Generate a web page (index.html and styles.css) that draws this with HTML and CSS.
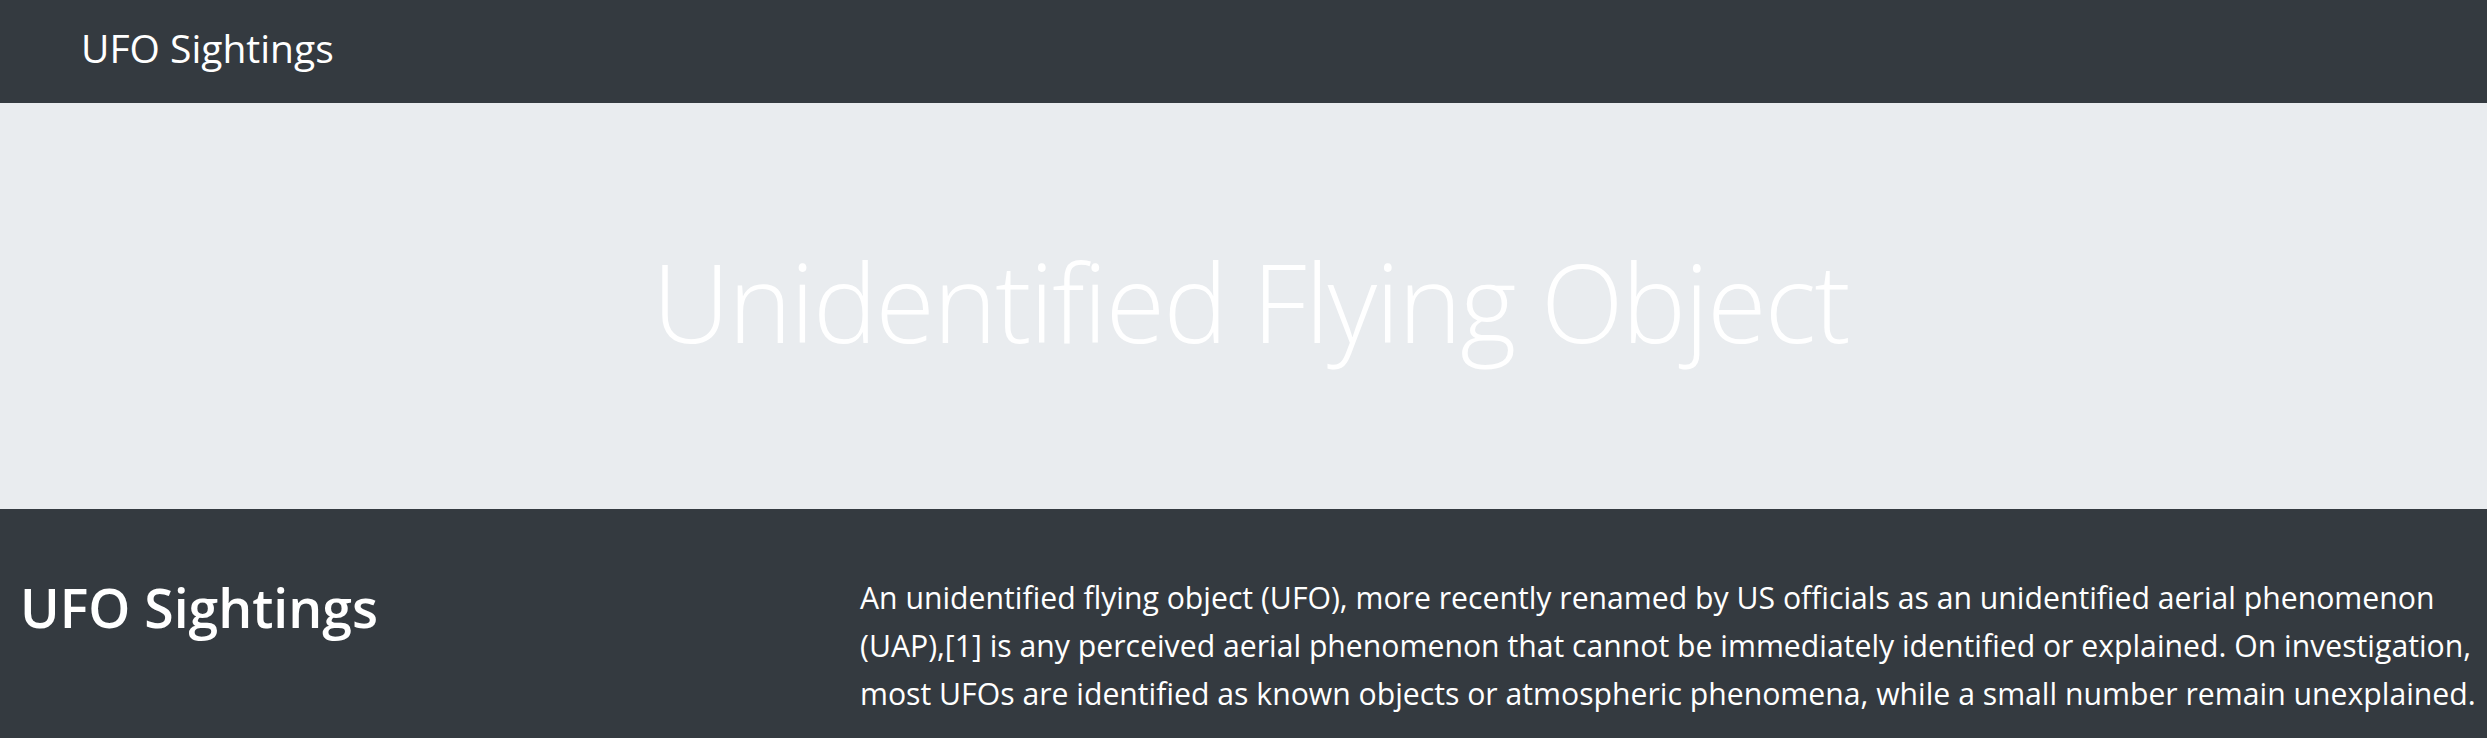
FILE: index.html
```html
<!DOCTYPE html>
<html lang="en">
<head>
<meta charset="utf-8">
<title>UFO Sightings</title>
<link rel="stylesheet" href="styles.css">
</head>
<body>
<nav class="navbar">
  <a class="brand" href="#">UFO Sightings</a>
</nav>
<header class="jumbotron">
  <h1 class="display">Unidentified Flying Object</h1>
</header>
<section class="intro">
  <div class="intro-title">
    <h3 class="section-heading">UFO Sightings</h3>
  </div>
  <div class="intro-text">
    <p class="lead-text">An unidentified flying object (UFO), more recently renamed by US officials as an unidentified aerial phenomenon (UAP),[1] is any perceived aerial phenomenon that cannot be immediately identified or explained. On investigation, most UFOs are identified as known objects or atmospheric phenomena, while a small number remain unexplained.</p>
  </div>
</section>
</body>
</html>
```
FILE: styles.css
```css
html, body {
  margin: 0;
  padding: 0;
}
body {
  background: #343a40;
  color: #ffffff;
  font-family: "Open Sans", "Noto Sans", sans-serif;
  min-height: 738px;
}

.navbar {
  background: #343a40;
  height: 103px;
  box-sizing: border-box;
  padding: 19px 0 0 81px;
}
.brand {
  display: block;
  color: #ffffff;
  text-decoration: none;
  font-size: 39px;
  line-height: 57px;
  font-weight: 400;
  width: max-content;
}

.jumbotron {
  background: #e9ecef;
  height: 406px;
  box-sizing: border-box;
  padding: 134px 0 0 14px;
}
.display {
  margin: 0;
  text-align: center;
  color: #ffffff;
  font-size: 108px;
  font-weight: 300;
  letter-spacing: -1.7px;
  line-height: 1.2;
}

.intro {
  display: grid;
  grid-template-columns: 840px 1fr;
  padding: 65px 4px 0 20px;
  background: #343a40;
}
.section-heading {
  margin: 2px 0 0 0;
  font-size: 53.5px;
  font-weight: 600;
  line-height: 1.2;
}
.lead-text {
  margin: 0;
  font-size: 30.2px;
  line-height: 48px;
  font-weight: 400;
}
```
